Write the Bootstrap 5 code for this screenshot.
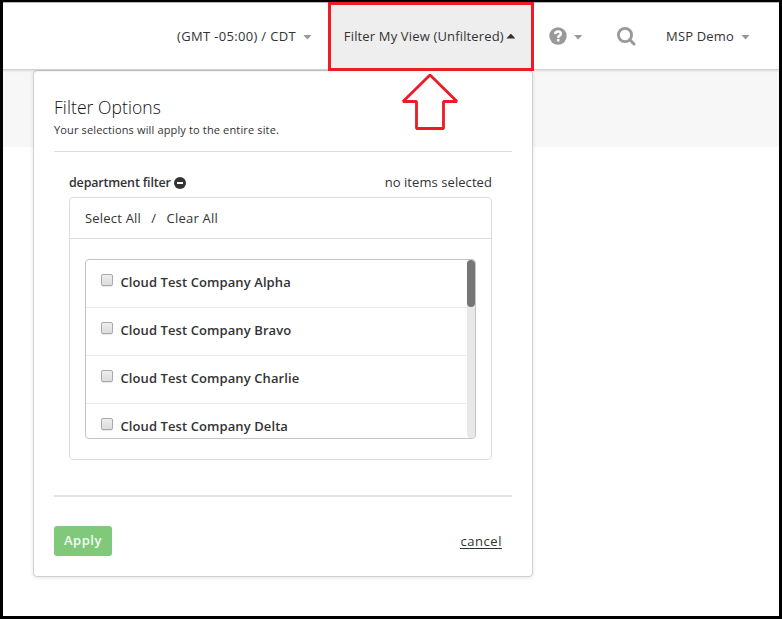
<!DOCTYPE html>
<html lang="en">
<head>
<meta charset="utf-8">
<meta name="viewport" content="width=device-width, initial-scale=1">
<title>Filter My View</title>
<link href="https://cdn.jsdelivr.net/npm/bootstrap@5.3.0/dist/css/bootstrap.min.css" rel="stylesheet">
<style>
body { font-family: "Open Sans", "Noto Sans", sans-serif; font-size: 13px; line-height: 20px; color: #333; }
.app-frame { height: 619px; border: 3px solid #000; border-top-width: 2px; background: #fff; }
.topbar { height: 68px; padding: 0 29px 0 174px; border-top: 1px solid #b5b5b5; border-bottom: 1px solid #d2d2d2; box-shadow: 0 1px 2px rgba(0,0,0,.12); z-index: 2; }
.tz-item { width: 151px; letter-spacing: .33px; }
.filter-toggle { width: 206px; height: 69px; margin-top: -1px; padding: 0 0 2px 13px; border: 3px solid #ed1c24; background: #eee; letter-spacing: .155px; z-index: 3; }
.help-item { width: 83px; padding-left: 15px; }
.search-item { width: 49.5px; }
.user-item { letter-spacing: .17px; }
.tri { width: 9px; height: 5px; background: #999; clip-path: polygon(0 0, 100% 0, 50% 100%); margin: 2px 0 0 7px; }
.tri-up { background: #333; clip-path: polygon(50% 0, 100% 100%, 0 100%); margin: 1px 0 0 2.5px; }
.subband { height: 77px; background: #f7f7f7; }
.filter-panel { left: 33px; top: 70px; width: 500px; height: 507px; padding: 26px 20px 0; border: 1px solid #d0d0d0; border-radius: 4px; background: #fff; box-shadow: 0 1px 4px rgba(0,0,0,.1); z-index: 1; }
.panel-title { font-size: 17.5px; line-height: 20px; font-weight: 300; letter-spacing: .08px; color: #111; }
.panel-note { font-size: 11px; line-height: 16px; letter-spacing: .145px; margin-top: 5px; padding-bottom: 13px; border-bottom: 1px solid #ddd; }
.group-head { padding: 21px 20px 0 15px; }
.group-name { font-weight: 600; font-size: 12.5px; letter-spacing: -.17px; }
.group-count { letter-spacing: .07px; margin-top: -1px; }
.group-icon { margin-left: 3px; }
.group-box { margin: 4px 20px 0 15px; height: 263px; border: 1px solid #ddd; border-radius: 4px; }
.pick-row { height: 41px; padding-left: 15px; letter-spacing: .2px; border-bottom: 1px solid #ddd; }
.pick-sep { padding: 0 10.3px; }
.pick-list { margin: 20px 15px 0; height: 180px; border: 1px solid #c4c4c4; border-radius: 4px; }
.pick-item { height: 48px; padding: 0 0 3px 15px; border-bottom: 1px solid #eaeaea; font-weight: 600; letter-spacing: .09px; }
.box-check { appearance: none; width: 12px; height: 12px; margin: 0 7.5px 4px 0; border: 1px solid #a9a9a9; border-radius: 2px; background: linear-gradient(#eee, #dcdcdc); box-shadow: 0 1px 1px rgba(0,0,0,.1); }
.track { width: 8px; background: #e8e8e8; border-radius: 4px; }
.thumb { height: 47px; background: #757575; border-radius: 4px; }
.panel-foot { margin-top: 35px; padding: 29px 10px 0 0; border-top: 2px solid #e2e2e2; }
.btn-apply, .btn-apply:hover { width: 58px; height: 30px; padding: 0; border: 0; border-radius: 3px; background: #80c97b; color: #f3fbf2; font-size: 13px; font-weight: 600; letter-spacing: .55px; }
.cancel-link { color: #333; letter-spacing: .55px; line-height: 13px; margin-top: 1px; border-bottom: 1px solid #333; }
.pointer-arrow { left: 400px; top: 72px; z-index: 4; }
</style>
</head>
<body>
<div class="app-frame overflow-hidden">
  <header class="topbar d-flex align-items-center position-relative">
    <div class="tz-item d-flex align-items-center text-nowrap">(GMT -05:00) / CDT<span class="tri"></span></div>
    <div class="filter-toggle d-flex align-items-center align-self-start text-nowrap position-relative">Filter My View (Unfiltered)<span class="tri tri-up"></span></div>
    <div class="help-item d-flex align-items-center">
      <svg width="18" height="18" viewBox="0 0 18 18" aria-label="Help"><circle cx="9" cy="9" r="8.7" fill="#999"/><path d="M6.1 7.1Q6.3 4.4 9.1 4.4Q11.8 4.4 11.8 6.7Q11.8 7.9 10.5 8.7Q9.2 9.4 9.2 10.9" fill="none" stroke="#fff" stroke-width="2.5"/><rect x="7.9" y="12" width="2.6" height="2.5" fill="#fff"/></svg>
      <span class="tri"></span>
    </div>
    <div class="search-item d-flex align-items-center">
      <svg width="19" height="19" viewBox="0 0 19 19" aria-label="Search"><circle cx="8" cy="8" r="6.6" fill="none" stroke="#999" stroke-width="2.8"/><path d="M12.8 12.8L17 17" stroke="#999" stroke-width="3" stroke-linecap="round"/></svg>
    </div>
    <div class="user-item d-flex align-items-center text-nowrap">MSP Demo<span class="tri"></span></div>
  </header>
  <div class="subband"></div>
</div>

<section class="filter-panel position-absolute">
  <h1 class="panel-title mb-0">Filter Options</h1>
  <p class="panel-note mb-0">Your selections will apply to the entire site.</p>
  <div class="group-head d-flex justify-content-between">
    <div class="d-flex align-items-center"><span class="group-name">department filter</span>
      <svg class="group-icon" width="12" height="12" viewBox="0 0 12 12" aria-hidden="true"><circle cx="6" cy="6" r="6" fill="#333"/><path d="M3 6H9" stroke="#fff" stroke-width="2"/></svg></div>
    <span class="group-count">no items selected</span>
  </div>
  <div class="group-box">
    <div class="pick-row d-flex align-items-center"><span>Select All</span><span class="pick-sep">/</span><span>Clear All</span></div>
    <div class="pick-list d-flex overflow-hidden">
      <div class="flex-grow-1">
        <label class="pick-item d-flex align-items-center"><input class="box-check" type="checkbox">Cloud Test Company Alpha</label>
        <label class="pick-item d-flex align-items-center"><input class="box-check" type="checkbox">Cloud Test Company Bravo</label>
        <label class="pick-item d-flex align-items-center"><input class="box-check" type="checkbox">Cloud Test Company Charlie</label>
        <label class="pick-item d-flex align-items-center"><input class="box-check" type="checkbox">Cloud Test Company Delta</label>
      </div>
      <div class="track"><div class="thumb"></div></div>
    </div>
  </div>
  <div class="panel-foot d-flex justify-content-between align-items-center">
    <button class="btn btn-apply" type="button">Apply</button>
    <a class="cancel-link text-decoration-none" href="#">cancel</a>
  </div>
</section>

<svg class="pointer-arrow position-absolute" width="60" height="60" viewBox="0 0 60 60" aria-hidden="true"><path d="M30 3L57 29.5H43.5V56.5H16.5V29.5H3Z" fill="#fff" stroke="#ed1c24" stroke-width="2.8" stroke-linejoin="bevel"/></svg>
<script src="https://cdn.jsdelivr.net/npm/bootstrap@5.3.0/dist/js/bootstrap.bundle.min.js"></script>
</body>
</html>
